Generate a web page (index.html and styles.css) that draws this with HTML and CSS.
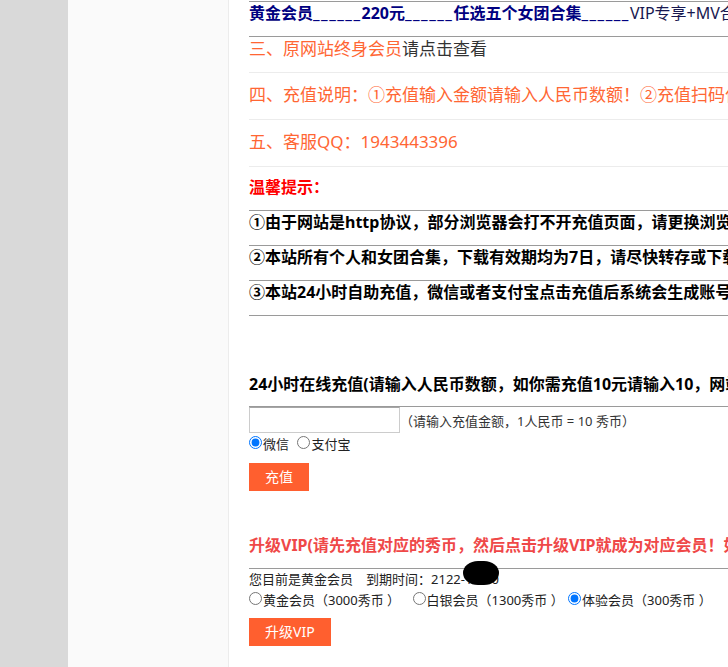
FILE: index.html
```html
<!DOCTYPE html>
<html lang="zh-CN">
<head>
<meta charset="utf-8">
<title>会员充值</title>
<link rel="stylesheet" href="styles.css">
</head>
<body>
<div class="rail"></div>
<aside class="side"></aside>
<main class="main">
  <div class="row-top"><b class="navy">黄金会员<span class="uline">______</span>220元<span class="uline">______</span>任选五个女团合集<span class="uline">______</span></b><span class="navy-light">VIP专享+MV合集+个人写真合集+全部资源下载</span></div>
  <div class="item first"><span class="orange">三、原网站终身会员</span><span class="gray">请点击查看</span></div>
  <div class="item"><span class="orange">四、充值说明：①充值输入金额请输入人民币数额！②充值扫码付款后请耐心等待页面跳转，到账后即可升级会员！</span></div>
  <div class="item"><span class="orange">五、客服QQ：1943443396</span></div>
  <div class="tip-title">温馨提示：</div>
  <div class="tip">①由于网站是http协议，部分浏览器会打不开充值页面，请更换浏览器或者使用电脑进行充值！</div>
  <div class="tip">②本站所有个人和女团合集，下载有效期均为7日，请尽快转存或下载到本地保存！</div>
  <div class="tip">③本站24小时自助充值，微信或者支付宝点击充值后系统会生成账号对应的订单，付款即可到账！</div>

  <h3 class="sec-title">24小时在线充值(请输入人民币数额，如你需充值10元请输入10，网站会自动换算成秀币)</h3>
  <div class="amount-row"><input class="amount" type="text"><span class="hint">（请输入充值金额，1人民币 = 10 秀币）</span></div>
  <div class="radio-row">
    <label class="opt first-opt"><input type="radio" name="pay" checked>微信</label>
    <label class="opt"><input type="radio" name="pay">支付宝</label>
  </div>
  <button class="btn" type="button">充值</button>

  <h3 class="sec-title vip">升级VIP(请先充值对应的秀币，然后点击升级VIP就成为对应会员！如有疑问请联系客服)</h3>
  <div class="info">您目前是黄金会员　到期时间：<span class="date">2122-12-30</span><span class="redact"></span></div>
  <div class="radio-row">
    <label class="opt first-opt"><input type="radio" name="lv">黄金会员（3000秀币 ）</label>
    <label class="opt gap-wide"><input type="radio" name="lv">白银会员（1300秀币 ）</label>
    <label class="opt gap-narrow"><input type="radio" name="lv" checked>体验会员（300秀币 ）</label>
  </div>
  <button class="btn" type="button">升级VIP</button>
</main>
</body>
</html>
```
FILE: styles.css
```css
html, body {
  margin: 0;
  padding: 0;
  overflow: hidden;
  background: #ffffff;
}

body {
  display: flex;
  min-height: 667px;
  font-family: "Noto Sans", "Noto Sans CJK SC", sans-serif;
  color: #000;
}

.rail {
  width: 68px;
  flex-shrink: 0;
  background: #d9d9d9;
}

.side {
  width: 160px;
  flex-shrink: 0;
  background: #fafafa;
  border-right: 1px solid #ececec;
}

.main {
  width: 1200px;
  flex-shrink: 0;
  padding: 1px 0 0 20px;
  white-space: nowrap;
}

.row-top {
  border-top: 1px solid #9a9a9a;
  border-bottom: 1px solid #9a9a9a;
  font-size: 16px;
  line-height: 23px;
  padding: 0 0 11px;
}

.navy {
  color: #000080;
  font-weight: 700;
}

.uline {
  letter-spacing: 1.5px;
}

.navy-light {
  color: #181850;
}

.item {
  font-size: 17px;
  line-height: 23px;
  padding: 10px 0 13px;
  border-bottom: 1px solid #ececec;
}

.item.first {
  padding: 0 0 12px;
}

.orange {
  color: #ff6633;
}

.gray {
  color: #333333;
}

.tip-title {
  color: #ff0000;
  font-weight: 700;
  font-size: 16px;
  line-height: 22px;
  padding: 9px 0 12px;
  border-bottom: 1px solid #9a9a9a;
}

.tip {
  font-weight: 700;
  font-size: 16px;
  line-height: 22px;
  padding: 0 0 12px;
  border-bottom: 1px solid #9a9a9a;
}

.sec-title {
  margin: 57px 0 0;
  font-size: 16px;
  font-weight: 700;
  line-height: 22px;
  padding: 0 0 11px;
  border-bottom: 1px solid #9a9a9a;
}

.sec-title.vip {
  margin-top: 43px;
  padding-bottom: 12px;
  color: #ef4848;
}

.amount-row {
  display: flex;
  align-items: center;
  height: 26px;
}

.amount {
  box-sizing: border-box;
  width: 151px;
  height: 26px;
  margin: 0;
  border: 1px solid #cccccc;
  border-top-color: #a6a6a6;
  border-radius: 0;
  padding: 0 4px;
  background: #fff;
}

.hint {
  font-size: 13px;
  color: #333;
}

.radio-row {
  font-size: 13px;
  line-height: 20px;
  height: 20px;
  color: #222;
}

.opt input {
  margin: 3px 1px 0 5px;
}

.first-opt input {
  margin-left: 0;
}

.gap-wide input {
  margin-left: 9px;
}

.gap-narrow input {
  margin-left: 1px;
}

.btn {
  display: block;
  height: 28px;
  margin-top: 10px;
  padding: 0 16px;
  border: none;
  border-radius: 0;
  background: #ff5f2f;
  color: #fff;
  font-family: "Noto Sans", "Noto Sans CJK SC", sans-serif;
  font-size: 14px;
  line-height: 28px;
}

.info + .radio-row + .btn {
  margin-top: 9px;
}

.info {
  position: relative;
  font-size: 13px;
  line-height: 20px;
  color: #222;
}

.redact {
  position: absolute;
  left: 214px;
  top: -8px;
  width: 36px;
  height: 24px;
  border-radius: 15px / 12px;
  background: #000;
}
```
